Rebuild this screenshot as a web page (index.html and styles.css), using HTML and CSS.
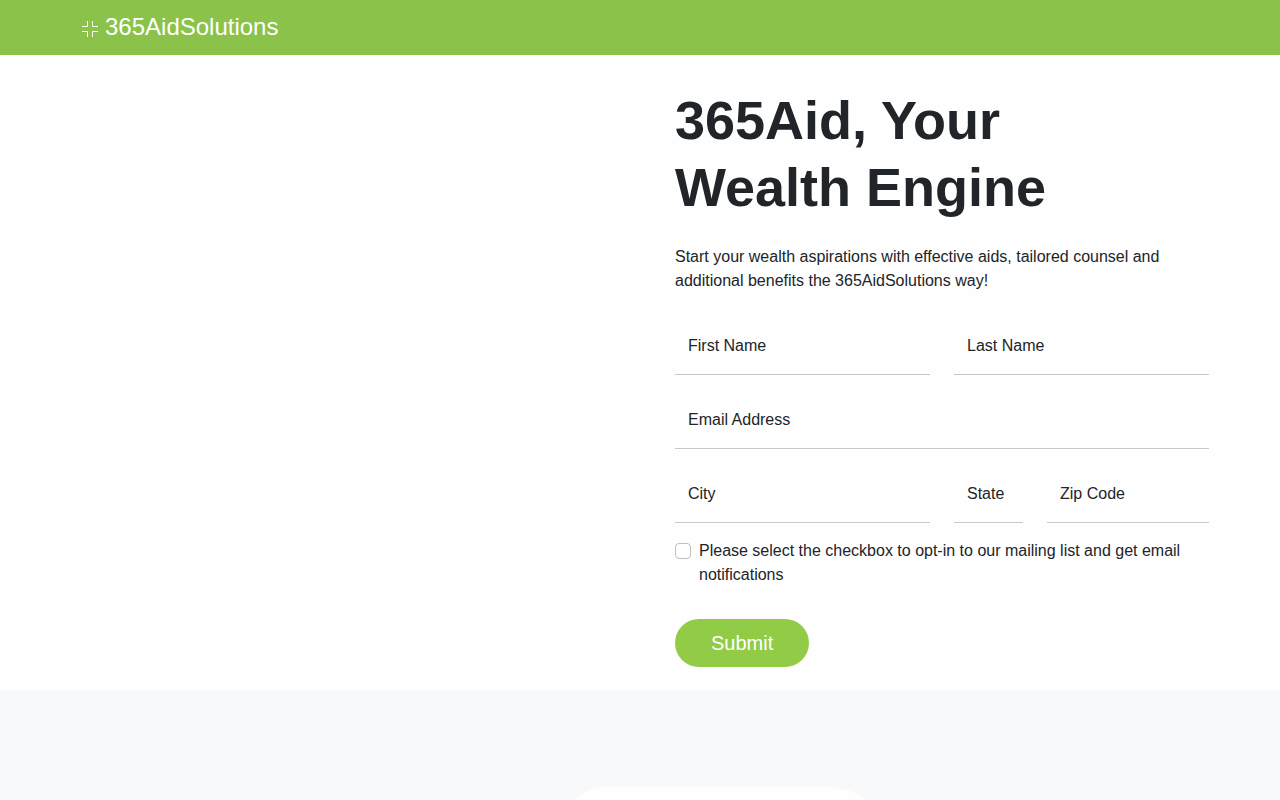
FILE: index.html
```html
<!DOCTYPE html>
<html lang="en">
<head>
    <meta charset="UTF-8">
    <meta name="viewport" content="width=device-width, initial-scale=1.0">
    <title>365AidSolutions</title>
    <link rel="stylesheet" href="styles.css">
</head>
<body>

    <header class="navbar">
        <div class="navbar-inner">
            <a class="brand" href="#">
                <svg class="brand-icon" viewBox="0 0 16 16" aria-hidden="true">
                    <path d="M5.5 0v5.5H0M10.5 0v5.5H16M0 10.5h5.5V16M16 10.5h-5.5V16"/>
                </svg>
                365AidSolutions
            </a>
        </div>
    </header>

    <main>
        <section class="hero">
            <div class="hero-grid">
                <div class="hero-image"></div>
                <div class="hero-content">
                    <h1>365Aid, Your<br>Wealth Engine</h1>
                    <p>Start your wealth aspirations with effective aids, tailored counsel and additional benefits the 365AidSolutions way!</p>

                    <form class="signup">
                        <div class="field half">
                            <input type="text" id="first-name">
                            <label for="first-name">First Name</label>
                        </div>
                        <div class="field half">
                            <input type="text" id="last-name">
                            <label for="last-name">Last Name</label>
                        </div>
                        <div class="field full">
                            <input type="email" id="email">
                            <label for="email">Email Address</label>
                        </div>
                        <div class="field half">
                            <input type="text" id="city">
                            <label for="city">City</label>
                        </div>
                        <div class="field state">
                            <input type="text" id="state">
                            <label for="state">State</label>
                        </div>
                        <div class="field zip">
                            <input type="text" id="zip">
                            <label for="zip">Zip Code</label>
                        </div>
                        <div class="check full">
                            <input type="checkbox" id="opt-in">
                            <label for="opt-in">Please select the checkbox to opt-in to our mailing list and get email notifications</label>
                        </div>
                        <button type="submit">Submit</button>
                    </form>
                </div>
            </div>
        </section>

        <section class="features">
            <div class="features-grid">
                <div class="card"></div>
            </div>
        </section>
    </main>

</body>
</html>
```
FILE: styles.css
```css
* {
    box-sizing: border-box;
}

body {
    margin: 0;
    font-family: "Liberation Sans", Arial, sans-serif;
    font-size: 16px;
    line-height: 24px;
    color: #212529;
    background-color: #fefefe;
}

.navbar {
    background-color: #8bc34a;
    padding: 8px 0;
}

.navbar-inner {
    max-width: 1140px;
    margin: 0 auto;
    padding: 0 12px;
}

.brand {
    display: inline-flex;
    align-items: center;
    gap: 7px;
    height: 39px;
    font-size: 24px;
    line-height: 36px;
    padding-bottom: 2px;
    color: #fff;
    text-decoration: none;
    vertical-align: top;
}

.brand-icon {
    width: 16px;
    height: 16px;
    margin-top: 4px;
    fill: none;
    stroke: #fff;
}

.hero {
    padding: 32px 0 24px;
}

.hero-grid {
    display: grid;
    grid-template-columns: 1fr 1fr;
    gap: 70px;
    max-width: 1138px;
    margin: 0 auto;
}

h1 {
    margin: 0 0 24px;
    font-size: 54px;
    line-height: 67px;
    font-weight: bold;
}

p {
    margin: 0 0 24px;
}

.signup {
    display: grid;
    grid-template-columns: repeat(12, 1fr);
    gap: 16px 24px;
}

.field {
    position: relative;
}

.half {
    grid-column: span 6;
}

.full {
    grid-column: span 12;
}

.state {
    grid-column: span 2;
}

.zip {
    grid-column: span 4;
}

.field input {
    display: block;
    width: 100%;
    height: 58px;
    padding: 17px 13px 16px;
    font: inherit;
    color: inherit;
    background-color: transparent;
    border: none;
    border-bottom: 1px solid #c8c8c8;
    outline: none;
}

/* label sits over the empty input */
.field label {
    position: absolute;
    top: 0;
    left: 0;
    padding: 17px 13px;
    white-space: nowrap;
    pointer-events: none;
}

.field input:focus + label {
    display: none;
}

.check {
    display: flex;
    align-items: flex-start;
    gap: 8px;
}

.check input {
    appearance: none;
    flex: none;
    width: 16px;
    height: 16px;
    margin: 4px 0 0;
    background-color: #fff;
    border: 1px solid #bfbfbf;
    border-radius: 4px;
}

.check input:checked {
    background-color: #8bc34a;
}

button {
    grid-column: span 12;
    justify-self: start;
    margin-top: 16px;
    padding: 9px 36px;
    font-family: inherit;
    font-size: 20px;
    line-height: 30px;
    color: #fff;
    background-color: #92cc47;
    border: none;
    border-radius: 24px;
    cursor: pointer;
}

.features {
    padding: 96px 0;
    background-color: #f8f9fb;
}

.features-grid {
    display: grid;
    grid-template-columns: 42.7% 28.5% auto;
    max-width: 1138px;
    margin: 0 auto;
}

.card {
    grid-column: 2;
    min-height: 320px;
    background-color: #fefefe;
    border-radius: 50px;
}
```
